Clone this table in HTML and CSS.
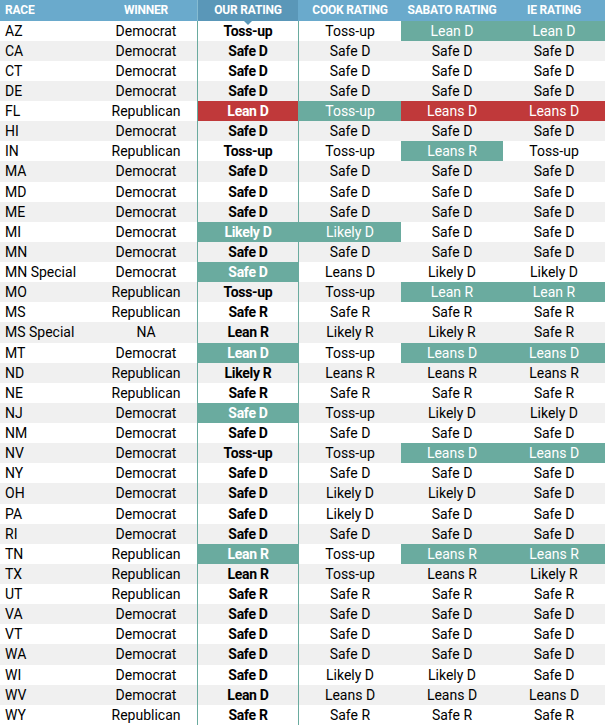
FILE: index.html
```html
<!DOCTYPE html>
<html>
<head>
<meta charset="utf-8">
<link rel="stylesheet" href="styles.css">
</head>
<body>
<div class="table">
  <div class="r head">
    <div class="c race">RACE</div>
    <div class="c">WINNER</div>
    <div class="c ours">OUR RATING</div>
    <div class="c">COOK RATING</div>
    <div class="c">SABATO RATING</div>
    <div class="c">IE RATING</div>
  </div>
  <div class="r"><div class="c race">AZ</div><div class="c">Democrat</div><div class="c ours">Toss-up</div><div class="c">Toss-up</div><div class="c teal">Lean D</div><div class="c teal">Lean D</div></div>
  <div class="r"><div class="c race">CA</div><div class="c">Democrat</div><div class="c ours">Safe D</div><div class="c">Safe D</div><div class="c">Safe D</div><div class="c">Safe D</div></div>
  <div class="r"><div class="c race">CT</div><div class="c">Democrat</div><div class="c ours">Safe D</div><div class="c">Safe D</div><div class="c">Safe D</div><div class="c">Safe D</div></div>
  <div class="r"><div class="c race">DE</div><div class="c">Democrat</div><div class="c ours">Safe D</div><div class="c">Safe D</div><div class="c">Safe D</div><div class="c">Safe D</div></div>
  <div class="r"><div class="c race">FL</div><div class="c">Republican</div><div class="c ours red">Lean D</div><div class="c teal">Toss-up</div><div class="c red">Leans D</div><div class="c red">Leans D</div></div>
  <div class="r"><div class="c race">HI</div><div class="c">Democrat</div><div class="c ours">Safe D</div><div class="c">Safe D</div><div class="c">Safe D</div><div class="c">Safe D</div></div>
  <div class="r"><div class="c race">IN</div><div class="c">Republican</div><div class="c ours">Toss-up</div><div class="c">Toss-up</div><div class="c teal">Leans R</div><div class="c">Toss-up</div></div>
  <div class="r"><div class="c race">MA</div><div class="c">Democrat</div><div class="c ours">Safe D</div><div class="c">Safe D</div><div class="c">Safe D</div><div class="c">Safe D</div></div>
  <div class="r"><div class="c race">MD</div><div class="c">Democrat</div><div class="c ours">Safe D</div><div class="c">Safe D</div><div class="c">Safe D</div><div class="c">Safe D</div></div>
  <div class="r"><div class="c race">ME</div><div class="c">Democrat</div><div class="c ours">Safe D</div><div class="c">Safe D</div><div class="c">Safe D</div><div class="c">Safe D</div></div>
  <div class="r"><div class="c race">MI</div><div class="c">Democrat</div><div class="c ours teal">Likely D</div><div class="c teal">Likely D</div><div class="c">Safe D</div><div class="c">Safe D</div></div>
  <div class="r"><div class="c race">MN</div><div class="c">Democrat</div><div class="c ours">Safe D</div><div class="c">Safe D</div><div class="c">Safe D</div><div class="c">Safe D</div></div>
  <div class="r"><div class="c race">MN Special</div><div class="c">Democrat</div><div class="c ours teal">Safe D</div><div class="c">Leans D</div><div class="c">Likely D</div><div class="c">Likely D</div></div>
  <div class="r"><div class="c race">MO</div><div class="c">Republican</div><div class="c ours">Toss-up</div><div class="c">Toss-up</div><div class="c teal">Lean R</div><div class="c teal">Lean R</div></div>
  <div class="r"><div class="c race">MS</div><div class="c">Republican</div><div class="c ours">Safe R</div><div class="c">Safe R</div><div class="c">Safe R</div><div class="c">Safe R</div></div>
  <div class="r"><div class="c race">MS Special</div><div class="c">NA</div><div class="c ours">Lean R</div><div class="c">Likely R</div><div class="c">Likely R</div><div class="c">Safe R</div></div>
  <div class="r"><div class="c race">MT</div><div class="c">Democrat</div><div class="c ours teal">Lean D</div><div class="c">Toss-up</div><div class="c teal">Leans D</div><div class="c teal">Leans D</div></div>
  <div class="r"><div class="c race">ND</div><div class="c">Republican</div><div class="c ours">Likely R</div><div class="c">Leans R</div><div class="c">Leans R</div><div class="c">Leans R</div></div>
  <div class="r"><div class="c race">NE</div><div class="c">Republican</div><div class="c ours">Safe R</div><div class="c">Safe R</div><div class="c">Safe R</div><div class="c">Safe R</div></div>
  <div class="r"><div class="c race">NJ</div><div class="c">Democrat</div><div class="c ours teal">Safe D</div><div class="c">Toss-up</div><div class="c">Likely D</div><div class="c">Likely D</div></div>
  <div class="r"><div class="c race">NM</div><div class="c">Democrat</div><div class="c ours">Safe D</div><div class="c">Safe D</div><div class="c">Safe D</div><div class="c">Safe D</div></div>
  <div class="r"><div class="c race">NV</div><div class="c">Democrat</div><div class="c ours">Toss-up</div><div class="c">Toss-up</div><div class="c teal">Leans D</div><div class="c teal">Leans D</div></div>
  <div class="r"><div class="c race">NY</div><div class="c">Democrat</div><div class="c ours">Safe D</div><div class="c">Safe D</div><div class="c">Safe D</div><div class="c">Safe D</div></div>
  <div class="r"><div class="c race">OH</div><div class="c">Democrat</div><div class="c ours">Safe D</div><div class="c">Likely D</div><div class="c">Likely D</div><div class="c">Safe D</div></div>
  <div class="r"><div class="c race">PA</div><div class="c">Democrat</div><div class="c ours">Safe D</div><div class="c">Likely D</div><div class="c">Safe D</div><div class="c">Safe D</div></div>
  <div class="r"><div class="c race">RI</div><div class="c">Democrat</div><div class="c ours">Safe D</div><div class="c">Safe D</div><div class="c">Safe D</div><div class="c">Safe D</div></div>
  <div class="r"><div class="c race">TN</div><div class="c">Republican</div><div class="c ours teal">Lean R</div><div class="c">Toss-up</div><div class="c teal">Leans R</div><div class="c teal">Leans R</div></div>
  <div class="r"><div class="c race">TX</div><div class="c">Republican</div><div class="c ours">Lean R</div><div class="c">Toss-up</div><div class="c">Leans R</div><div class="c">Likely R</div></div>
  <div class="r"><div class="c race">UT</div><div class="c">Republican</div><div class="c ours">Safe R</div><div class="c">Safe R</div><div class="c">Safe R</div><div class="c">Safe R</div></div>
  <div class="r"><div class="c race">VA</div><div class="c">Democrat</div><div class="c ours">Safe D</div><div class="c">Safe D</div><div class="c">Safe D</div><div class="c">Safe D</div></div>
  <div class="r"><div class="c race">VT</div><div class="c">Democrat</div><div class="c ours">Safe D</div><div class="c">Safe D</div><div class="c">Safe D</div><div class="c">Safe D</div></div>
  <div class="r"><div class="c race">WA</div><div class="c">Democrat</div><div class="c ours">Safe D</div><div class="c">Safe D</div><div class="c">Safe D</div><div class="c">Safe D</div></div>
  <div class="r"><div class="c race">WI</div><div class="c">Democrat</div><div class="c ours">Safe D</div><div class="c">Likely D</div><div class="c">Likely D</div><div class="c">Safe D</div></div>
  <div class="r"><div class="c race">WV</div><div class="c">Democrat</div><div class="c ours">Lean D</div><div class="c">Leans D</div><div class="c">Leans D</div><div class="c">Leans D</div></div>
  <div class="r"><div class="c race">WY</div><div class="c">Republican</div><div class="c ours">Safe R</div><div class="c">Safe R</div><div class="c">Safe R</div><div class="c">Safe R</div></div>
</div>
</body>
</html>
```

FILE: styles.css
```css
html, body {
  margin: 0;
  padding: 0;
  background: #ffffff;
}

.table {
  width: 605px;
  display: flex;
  flex-direction: column;
  font-family: Roboto, "Liberation Sans", sans-serif;
  font-size: 14px;
  color: #000000;
}

.r {
  display: grid;
  grid-template-columns: 95px repeat(5, 102px);
  height: 20.14px;
  line-height: 20.14px;
  background: #ffffff;
}

.r:nth-child(odd) {
  background: #f0f0f0;
}

.r.head {
  height: 20.5px;
  line-height: 20.5px;
  background: #6aaacc;
  color: #ffffff;
  font-size: 12px;
  font-weight: 700;
  letter-spacing: -0.2px;
  position: relative;
  z-index: 1;
}

.c {
  text-align: center;
  white-space: nowrap;
  box-sizing: border-box;
  overflow: visible;
}

.c.race {
  text-align: left;
  padding-left: 5px;
}

.c.ours {
  font-weight: 700;
  border-left: 1px solid #6aab9f;
  border-right: 1px solid #6aab9f;
  letter-spacing: -0.3px;
}

.head .c.ours {
  background: #5a97b8;
  border-left: 1px solid #86bcd2;
  border-right: 1px solid #6aaacc;
  position: relative;
  letter-spacing: -0.2px;
}

.head .c.ours::after {
  content: "";
  position: absolute;
  left: 50%;
  bottom: -4px;
  margin-left: -4px;
  border-left: 4px solid transparent;
  border-right: 4px solid transparent;
  border-top: 4px solid #5a97b8;
}

.c.teal {
  background: #6aab9f;
  color: #ffffff;
}

.c.red {
  background: #c0393a;
  color: #ffffff;
}
```
